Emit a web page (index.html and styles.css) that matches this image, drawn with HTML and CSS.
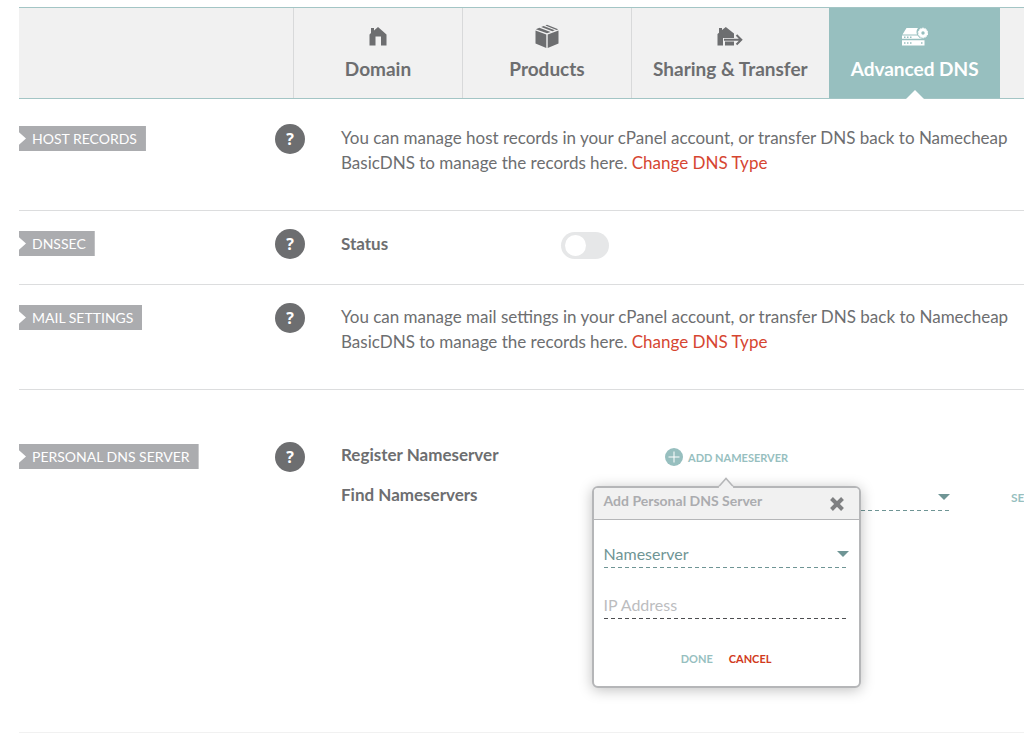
FILE: index.html
```html
<!DOCTYPE html>
<html lang="en">
<head>
  <meta charset="UTF-8">
  <meta name="viewport" content="width=device-width, initial-scale=1.0">
  <title>Advanced DNS</title>
  <link rel="stylesheet" href="styles.css">
</head>
<body>

  <main class="page">
    <!-- Tabs -->
    <nav class="tabs">
      <div class="tabs-lead"></div>
      <a href="#domain" class="tab">
        <svg class="tab-icon" width="26" height="26" viewBox="0 0 26 26" fill="currentColor">
          <path d="M4.500 22.500V11.500L6 10V5h3v2.500L13 4l8.500 7.500v11H16v-9h-5.500v9z"/>
        </svg>
        <span>Domain</span>
      </a>
      <a href="#products" class="tab">
        <svg class="tab-icon" width="26" height="26" viewBox="0 0 26 26" fill="currentColor">
          <path d="M1.500 7.500l10.800 4V25L1.500 20.500zM24.500 7.500l-10.800 4V25l10.800-4.500zM1.800 6.300L5.400 4.800l11.200 4.100L13 10.300zM7.200 4.100L9.600 3l11.200 4.200-2.400 1zM11.400 2.400L13 1.700l11.200 4.600-1.600.600z"/>
        </svg>
        <span>Products</span>
      </a>
      <a href="#sharing" class="tab">
        <svg class="tab-icon" width="26" height="26" viewBox="0 0 26 26" fill="currentColor">
          <path d="M.500 22.500V11L2 9.700V5h3v2L8.800 4l8.200 6.500V15H6v7.500zM8 18.500h9v4H8z"/>
          <path d="M7 16.800h17M19.500 12l4.800 4.800-4.800 4.700" fill="none" stroke="currentColor" stroke-width="2"/>
        </svg>
        <span>Sharing &amp; Transfer</span>
      </a>
      <a href="#advanced" class="tab active">
        <svg class="tab-icon" width="26" height="26" viewBox="0 0 26 26" fill="currentColor">
          <path d="M4.500 5H16a6.500 6.500 0 0 0-1 6.500H.500zM0 12.500h15.500a6.500 6.500 0 0 0 5 3.300H0zM0 17.300h22.500V22.500H0z"/>
          <circle cx="21" cy="10" r="3.200" fill="none" stroke="currentColor" stroke-width="3"/>
          <circle cx="21" cy="10" r="4.800" fill="none" stroke="currentColor" stroke-width="1" stroke-dasharray="2 1"/>
          <path class="server-lights" d="M2 14.200h1.500M5 14.200h1.500M8 14.200h1.500M2 20h1.500M5 20h1.500M8 20h1.500M19 20h1.500"/>
        </svg>
        <span>Advanced DNS</span>
      </a>
      <div class="tabs-rest"></div>
    </nav>

    <!-- Host records -->
    <section class="row row-host">
      <h2 class="tag">HOST RECORDS</h2>
      <button class="help" aria-label="Help with host records">?</button>
      <p class="info">You can manage host records in your cPanel account, or transfer DNS back to Namecheap BasicDNS to manage the records here. <a href="#dns-type">Change DNS Type</a></p>
    </section>

    <!-- DNSSEC -->
    <section class="row row-dnssec">
      <h2 class="tag">DNSSEC</h2>
      <button class="help" aria-label="Help with DNSSEC">?</button>
      <div class="status">
        <label for="dnssec-status" class="field-name">Status</label>
        <input type="checkbox" id="dnssec-status" class="toggle">
      </div>
    </section>

    <!-- Mail settings -->
    <section class="row row-mail">
      <h2 class="tag">MAIL SETTINGS</h2>
      <button class="help" aria-label="Help with mail settings">?</button>
      <p class="info">You can manage mail settings in your cPanel account, or transfer DNS back to Namecheap BasicDNS to manage the records here. <a href="#dns-type">Change DNS Type</a></p>
    </section>

    <!-- Personal DNS server -->
    <section class="row row-personal">
      <h2 class="tag">PERSONAL DNS SERVER</h2>
      <button class="help" aria-label="Help with personal DNS server">?</button>
      <div class="nameservers">
        <div class="ns-line">
          <span class="field-name">Register Nameserver</span>
          <div class="add-wrap">
            <button class="text-button add-button">
              <svg width="18" height="18" viewBox="0 0 18 18">
                <circle cx="9" cy="9" r="9" fill="#97bfbf"/>
                <path d="M3.500 9h11M9 3.500v11" stroke="#fff" stroke-width="1"/>
              </svg>
              ADD NAMESERVER
            </button>

            <form class="popover">
              <svg class="popover-arrow" width="18" height="11" viewBox="0 0 18 11">
                <path d="M1 10.500L9 1.500l8 9" fill="#f1f1f1" stroke="#b5b6b8" stroke-width="1.500"/>
                <path d="M2 10.500h14" stroke="#f1f1f1" stroke-width="2"/>
              </svg>
              <div class="popover-head">
                <h3>Add Personal DNS Server</h3>
                <button type="button" class="close" aria-label="Close">
                  <svg width="16" height="16" viewBox="0 0 16 16">
                    <path d="M2.500 2.500l11 11M13.500 2.500l-11 11" stroke="#7f8082" stroke-width="4"/>
                  </svg>
                </button>
              </div>
              <div class="popover-body">
                <div class="select-wrap">
                  <select class="dashed-field" aria-label="Nameserver">
                    <option>Nameserver</option>
                  </select>
                </div>
                <input type="text" class="dashed-field ip-field" placeholder="IP Address" aria-label="IP Address">
                <div class="popover-actions">
                  <button type="button" class="text-button">DONE</button>
                  <button type="button" class="text-button cancel">CANCEL</button>
                </div>
              </div>
            </form>
          </div>
        </div>
        <div class="ns-line">
          <label for="find-ns" class="field-name">Find Nameservers</label>
          <div class="find">
            <div class="select-wrap find-select">
              <select class="dashed-field" id="find-ns">
                <option></option>
              </select>
            </div>
            <button class="text-button search">SEARCH</button>
          </div>
        </div>
      </div>
    </section>
  </main>

</body>
</html>
```
FILE: styles.css
```css
* {
  box-sizing: border-box;
}

body {
  margin: 0;
  background-color: #fff;
  color: #6d6e70;
  font-family: Lato, "Open Sans", sans-serif;
  font-size: 16px;
  line-height: 25px;
}

button,
input,
select {
  font: inherit;
  color: inherit;
}

button {
  padding: 0;
  border: none;
  background: none;
  cursor: pointer;
}

.page {
  padding-top: 7px;
  overflow: hidden;
}

/* Tabs */
.tabs {
  display: flex;
  height: 92px;
  margin-left: 19px;
  background-color: #f1f1f1;
  border-top: 1px solid #a3c5c5;
  border-bottom: 1px solid #a3c5c5;
}

.tabs-lead {
  flex: 0 0 274px;
}

.tab {
  position: relative;
  flex: none;
  display: flex;
  flex-direction: column;
  align-items: center;
  gap: 7px;
  min-width: 169px;
  padding: 15px 21px 0;
  border-left: 1px solid #d8d9da;
  color: #6d6e70;
  font-size: 19px;
  font-weight: bold;
  text-decoration: none;
}

.tab.active {
  background-color: #97bfbf;
  border-color: #97bfbf;
  color: #fff;
}

/* notch under the active tab */
.tab.active::after {
  content: "";
  position: absolute;
  bottom: -1px;
  left: 50%;
  margin-left: -9px;
  border: 9px solid transparent;
  border-top: none;
  border-bottom-color: #fff;
}

.server-lights {
  stroke: #97bfbf;
  stroke-width: 1.5;
}

.tabs-rest {
  flex: 1;
}

/* Setting rows */
.row {
  display: grid;
  grid-template-columns: 256px 66px 1fr;
  align-items: start;
  margin-left: 19px;
  border-bottom: 1px solid #dcddde;
}

.row-host {
  padding: 25px 0 32px;
}

.row-dnssec {
  padding: 18px 0 25px;
}

.row-mail {
  padding: 18px 0 32px;
}

.row-personal {
  padding: 52px 0 220px;
  border-color: #f1f1f1;
}

.tag {
  justify-self: start;
  margin: 2px 0 0;
  padding: 0 9px 0 13px;
  background-color: #abacaf;
  clip-path: polygon(0 0, 100% 0, 100% 100%, 0 100%, 0 75%, 7px 50%, 0 25%);
  color: #fff;
  font-size: 14px;
  font-weight: normal;
}

.help {
  width: 30px;
  height: 30px;
  border-radius: 50%;
  background-color: #6d6e70;
  color: #fff;
  font-family: "Open Sans", sans-serif;
  font-size: 16px;
  font-weight: bold;
}

.info {
  margin: 1px 10px 3px 0;
  font-size: 17px;
}

.info a {
  color: #d64531;
  text-decoration: none;
}

.field-name {
  font-size: 17px;
  font-weight: bold;
}

.status {
  display: grid;
  grid-template-columns: 220px 1fr;
  align-items: start;
  padding-top: 2px;
}

.toggle {
  appearance: none;
  display: flex;
  width: 48px;
  height: 27px;
  margin: 1px 0 0;
  padding: 3px 4px;
  border-radius: 14px;
  background-color: #e6e7e8;
}

.toggle::before {
  content: "";
  width: 21px;
  height: 21px;
  border-radius: 50%;
  background-color: #fff;
}

.toggle:checked {
  justify-content: flex-end;
  background-color: #97bfbf;
}

/* Personal DNS server */
.nameservers {
  display: flex;
  flex-direction: column;
  gap: 10px;
}

.ns-line {
  display: grid;
  grid-template-columns: 324px 1fr;
  height: 30px;
}

.add-wrap {
  position: relative;
  justify-self: start;
}

.text-button {
  color: #97bfbf;
  font-size: 11px;
  font-weight: bold;
}

.search {
  font-size: 12px;
}

.add-button {
  display: flex;
  align-items: center;
  gap: 5px;
  height: 30px;
}

.find {
  display: flex;
  gap: 61px;
}

.find-select {
  flex: 0 0 285px;
}

.select-wrap {
  display: grid;
  align-items: center;
}

.select-wrap::after {
  content: "";
  grid-area: 1 / 1;
  justify-self: end;
  border: 6px solid transparent;
  border-top-color: #6f9595;
  border-bottom: none;
  pointer-events: none;
}

.dashed-field {
  grid-area: 1 / 1;
  appearance: none;
  width: 100%;
  height: 28px;
  padding: 0 0 2px;
  border: none;
  border-radius: 0;
  background: repeating-linear-gradient(90deg, currentColor 0 4px, transparent 4px 7px) bottom / 100% 1px no-repeat;
  color: #6f9595;
  outline: none;
}

/* Popover */
.popover {
  position: absolute;
  top: 44px;
  left: 50%;
  z-index: 1;
  width: 269px;
  margin-left: -135px;
  background-color: #fff;
  border: 2px solid #b5b6b8;
  border-radius: 6px;
  box-shadow: 0 2px 14px rgba(0, 0, 0, 0.25);
}

.popover-arrow {
  position: absolute;
  bottom: 100%;
  left: 50%;
  margin-left: -9px;
}

.popover-head {
  display: flex;
  justify-content: space-between;
  height: 32px;
  padding: 0 14px 0 10px;
  background-color: #f1f1f1;
  border-bottom: 1px solid #b5b6b8;
  border-radius: 4px 4px 0 0;
}

.popover-head h3 {
  margin: 0;
  color: #abacaf;
  font-size: 14px;
}

.close {
  display: flex;
  align-items: center;
}

.popover-body {
  padding: 20px 10px 15px;
}

.ip-field {
  margin-top: 23px;
  color: #4d4e50;
}

.ip-field::placeholder {
  color: #bcbdbf;
  opacity: 1;
}

.popover-actions {
  display: flex;
  justify-content: center;
  gap: 16px;
  margin-top: 27px;
}

.cancel {
  color: #d13a20;
}
```
